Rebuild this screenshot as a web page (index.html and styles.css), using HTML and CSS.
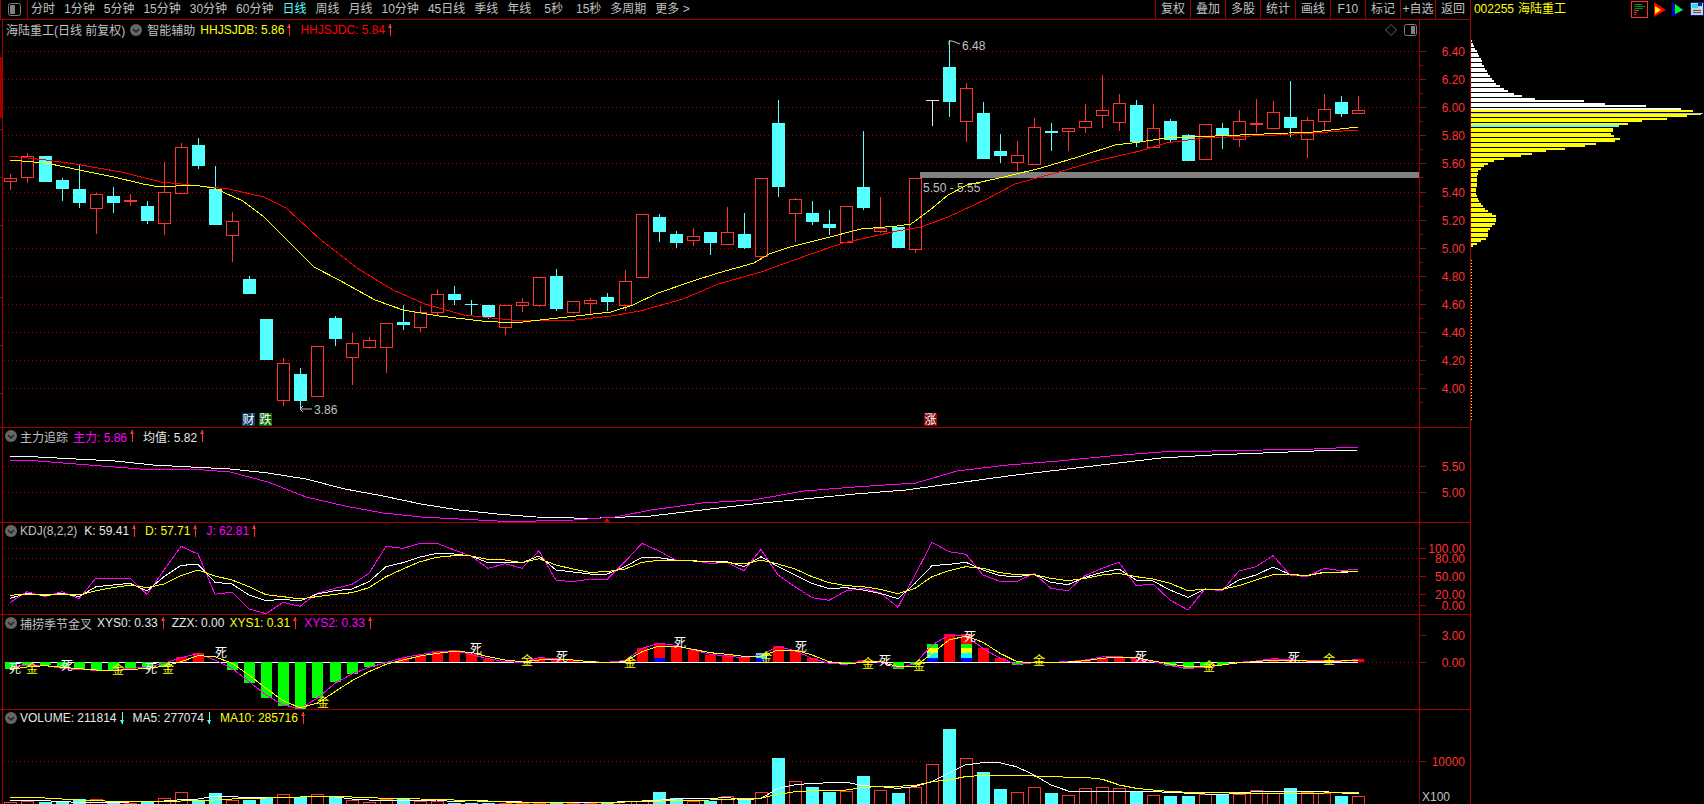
FILE: index.html
```html
<!DOCTYPE html>
<html lang="zh-CN">
<head>
    <meta charset="UTF-8">
    <title>海陆重工 002255</title>
    <link rel="stylesheet" href="styles.css">
</head>
<body>

    <!-- top bar -->
    <div class="toolbar">
        <div class="toolbar-main">
            <div class="tool-icon">
                <svg width="13" height="13" viewBox="0 0 13 13"><rect x="0.5" y="0.5" width="12" height="12" rx="2" fill="none" stroke="#808080"/><rect x="2" y="2" width="5" height="9" fill="#808080"/></svg>
            </div>
            <div class="periods">
                <span>分时</span><span>1分钟</span><span>5分钟</span><span>15分钟</span><span>30分钟</span><span>60分钟</span>
                <span class="active">日线</span><span>周线</span><span>月线</span><span>10分钟</span><span>45日线</span><span>季线</span>
                <span>年线</span><span class="wide">5秒</span><span class="wide">15秒</span><span>多周期</span><span>更多 &gt;</span>
            </div>
            <div class="actions">
                <span>复权</span><span>叠加</span><span>多股</span><span>统计</span><span>画线</span><span>F10</span><span>标记</span><span>+自选</span><span>返回</span>
            </div>
        </div>
        <div class="quote">
            <span class="quote-code">002255</span>
            <span class="quote-name">海陆重工</span>
            <div class="quote-icons">
                <svg width="17" height="17" viewBox="0 0 17 17" shape-rendering="crispEdges"><rect x="0.5" y="0.5" width="16" height="16" fill="none" stroke="#ff3232"/><rect x="3" y="3" width="8" height="1" fill="#0a8a0a"/><rect x="3" y="5" width="11" height="1" fill="#0a8a0a"/><rect x="3" y="7" width="9" height="1" fill="#0a8a0a"/><rect x="3" y="9" width="5" height="1" fill="#ff3232"/><rect x="3" y="11" width="3" height="1" fill="#ff3232"/><rect x="3" y="13" width="2" height="1" fill="#ff3232"/></svg>
                <svg width="12" height="15" viewBox="0 0 12 15"><polygon points="0,0 12,8 0,15" fill="#ff0000"/><polygon points="1,4 7,8 1,12" fill="#ffff00"/></svg>
                <svg width="12" height="15" viewBox="0 0 12 15"><polygon points="0,0 12,8 0,15" fill="#0000e0"/><polygon points="3,2 11,8 3,12" fill="#00ff00"/></svg>
                <svg width="14" height="14" viewBox="0 0 14 14" shape-rendering="crispEdges"><rect width="14" height="14" fill="#101c80"/><rect x="1" y="1" width="12" height="12" fill="#c8d0d8"/><rect x="2" y="2" width="6" height="4" fill="#20e0e0"/><rect x="8" y="1" width="4" height="3" fill="#101c80"/><rect x="3" y="8" width="8" height="1" fill="#505060"/><rect x="3" y="10" width="8" height="1" fill="#505060"/></svg>
            </div>
        </div>
    </div>

    <div class="workspace">
        <div class="panes">

            <section class="pane pane-main">
                <div class="legend legend-main">
                    <span class="grey">海陆重工(日线 前复权)</span>
                    <svg class="ball" width="12" height="12" viewBox="0 0 12 12"><circle cx="6" cy="6" r="6" fill="#666"/><path d="M3 5 L6 8 L9 5" fill="none" stroke="#222" stroke-width="1.5"/></svg>
                    <span class="grey">智能辅助</span>
                    <span class="yellow">HHJSJDB: 5.86</span><i class="up"></i>
                    <span class="red">HHJSJDC: 5.84</span><i class="up"></i>
                </div>
                <div class="pane-tools">
                    <svg width="12" height="12" viewBox="0 0 12 12"><path d="M6 0.5 L11.5 6 L6 11.5 L0.5 6 Z" fill="none" stroke="#666"/></svg>
                    <svg width="13" height="12" viewBox="0 0 13 12"><rect x="0.5" y="0.5" width="12" height="11" rx="2" fill="none" stroke="#808080"/><rect x="7" y="2" width="4" height="8" fill="#808080"/></svg>
                </div>
                <svg class="chart" id="mainChart"></svg>
            </section>

            <section class="pane pane-force">
                <div class="legend">
                    <svg class="ball" width="12" height="12" viewBox="0 0 12 12"><circle cx="6" cy="6" r="6" fill="#666"/><path d="M3 5 L6 8 L9 5" fill="none" stroke="#222" stroke-width="1.5"/></svg>
                    <span class="grey">主力追踪</span>
                    <span class="magenta">主力: 5.86</span><i class="up"></i>
                    <span class="white">均值: 5.82</span><i class="up"></i>
                </div>
                <svg class="chart" id="forceChart"></svg>
            </section>

            <section class="pane pane-kdj">
                <div class="legend">
                    <svg class="ball" width="12" height="12" viewBox="0 0 12 12"><circle cx="6" cy="6" r="6" fill="#666"/><path d="M3 5 L6 8 L9 5" fill="none" stroke="#222" stroke-width="1.5"/></svg>
                    <span class="grey kdj-name">KDJ(8,2,2)</span>
                    <span class="white">K: 59.41</span><i class="up"></i>
                    <span class="yellow">D: 57.71</span><i class="up"></i>
                    <span class="magenta">J: 62.81</span><i class="up"></i>
                </div>
                <svg class="chart" id="kdjChart"></svg>
            </section>

            <section class="pane pane-season">
                <div class="legend">
                    <svg class="ball" width="12" height="12" viewBox="0 0 12 12"><circle cx="6" cy="6" r="6" fill="#666"/><path d="M3 5 L6 8 L9 5" fill="none" stroke="#222" stroke-width="1.5"/></svg>
                    <span class="grey">捕捞季节金叉</span>
                    <span class="white">XYS0: 0.33</span><i class="up"></i>
                    <span class="white">ZZX: 0.00</span>
                    <span class="yellow">XYS1: 0.31</span><i class="up"></i>
                    <span class="magenta">XYS2: 0.33</span><i class="up"></i>
                </div>
                <svg class="chart" id="seasonChart"></svg>
            </section>

            <section class="pane pane-volume">
                <div class="legend">
                    <svg class="ball" width="12" height="12" viewBox="0 0 12 12"><circle cx="6" cy="6" r="6" fill="#666"/><path d="M3 5 L6 8 L9 5" fill="none" stroke="#222" stroke-width="1.5"/></svg>
                    <span class="white">VOLUME: 211814</span><i class="down"></i>
                    <span class="white">MA5: 277074</span><i class="down"></i>
                    <span class="yellow">MA10: 285716</span><i class="up"></i>
                </div>
                <svg class="chart" id="volumeChart"></svg>
            </section>

        </div>
        <div class="side">
            <svg id="profile" width="233" height="784"></svg>
        </div>
    </div>

    <script src="script.js"></script>
</body>
</html>
```

FILE: styles.css
```css
* {
    box-sizing: border-box;
}

html, body {
    margin: 0;
    height: 100%;
    overflow: hidden;
    background-color: #000;
}

body {
    font-family: "Liberation Sans", "Noto Sans CJK SC", sans-serif;
    font-size: 12px;
    color: #c0c0c0;
}

/* top bar */
.toolbar {
    display: flex;
    height: 20px;
}

.toolbar-main {
    display: flex;
    width: 1470px;
    border-bottom: 1px solid #a00000;
}

.tool-icon {
    display: flex;
    align-items: center;
    justify-content: center;
    width: 28px;
    padding-left: 1px;
    border-left: 1px solid #a00000;
    border-right: 1px solid #a00000;
}

.periods {
    display: flex;
    flex: 1;
    gap: 9px;
    padding-left: 3px;
    line-height: 19px;
}

.periods .active {
    color: #54ffff;
}

.periods .wide {
    margin-left: 4px;
}

.actions {
    display: flex;
    line-height: 19px;
}

.actions span {
    width: 35px;
    text-align: center;
    border-left: 1px solid #a00000;
}

.quote {
    display: flex;
    flex: 1;
    padding-left: 3px;
    line-height: 18px;
    color: #ffff00;
    white-space: nowrap;
    border-left: 1px solid #a00000;
}

.quote-name {
    margin-left: 4px;
}

.quote-icons {
    display: flex;
    flex-shrink: 0;
    align-items: center;
    gap: 6px;
    margin-left: 65px;
    padding-bottom: 2px;
}

/* chart panes */
.workspace {
    display: flex;
    height: 784px;
}

.panes {
    width: 1470px;
}

.pane {
    position: relative;
    border-bottom: 1px solid #a00000;
}

.pane-main {
    height: 408px;
}

.pane-force {
    height: 95px;
}

.pane-kdj {
    height: 92px;
}

.pane-season {
    height: 95px;
}

.pane-volume {
    height: 94px;
    border-bottom: none;
}

.chart {
    display: block;
}

.legend {
    position: absolute;
    top: 0;
    left: 5px;
    z-index: 2;
    display: flex;
    align-items: center;
    gap: 5px;
    height: 16px;
    white-space: nowrap;
}

.legend .ball {
    margin-right: -2px;
}

.legend-main {
    left: 6px;
    height: 19px;
}

.legend-main .ball {
    margin-right: 0;
}

.kdj-name {
    margin-right: 2px;
}

.legend i {
    display: block;
    position: relative;
    width: 5px;
    height: 12px;
    margin: 0 3px 0 -2px;
}

.pane-season .legend i {
    margin-right: 1px;
}

.legend i::before {
    content: "";
    position: absolute;
    left: 2px;
    width: 1px;
    height: 12px;
}

.legend i::after {
    content: "";
    position: absolute;
    left: 0;
    border-left: 2.5px solid transparent;
    border-right: 2.5px solid transparent;
}

.legend .up::before {
    background-color: #ff3232;
}

.legend .up::after {
    top: 0;
    border-bottom: 4px solid #ff3232;
}

.legend .down::before {
    background-color: #54ffff;
}

.legend .down::after {
    bottom: 0;
    border-top: 4px solid #54ffff;
}

.pane-tools {
    position: absolute;
    top: 4px;
    left: 1385px;
    z-index: 2;
    display: flex;
    gap: 7px;
}

.grey {
    color: #c0c0c0;
}

.white {
    color: #e8e8e8;
}

.yellow {
    color: #ffff00;
}

.red {
    color: #ff0000;
}

.magenta {
    color: #ff00ff;
}

/* volume by price */
.side {
    flex: 1;
    border-left: 1px solid #a00000;
}

#profile {
    display: block;
}
```

FILE: script.js
```javascript
var NS = "http://www.w3.org/2000/svg";
var RED = "#ff3232";
var CYAN = "#54ffff";
var LINE = "#a00000";

// x of candle i
function kx(i) {
    return Math.round(10.4 + 17.06 * i);
}

function el(parent, name, attrs, text) {
    var node = document.createElementNS(NS, name);
    for (var k in attrs) {
        node.setAttribute(k, attrs[k]);
    }
    if (text) {
        node.textContent = text;
    }
    parent.appendChild(node);
    return node;
}

function setup(id, top, height) {
    var svg = document.getElementById(id);
    svg.setAttribute("width", 1470);
    svg.setAttribute("height", height);
    svg.setAttribute("viewBox", "0 " + top + " 1470 " + height);
    el(svg, "rect", { x: 2, y: top, width: 1, height: height, fill: LINE, "shape-rendering": "crispEdges" });
    el(svg, "rect", { x: 1419, y: top, width: 1, height: height, fill: LINE, "shape-rendering": "crispEdges" });
    return svg;
}

function box(svg, x, y, w, h, fill) {
    el(svg, "rect", { x: x, y: y, width: w, height: h, fill: fill, "shape-rendering": "crispEdges" });
}

function outline(svg, x, y, w, h, color) {
    el(svg, "rect", { x: x + 0.5, y: y + 0.5, width: w - 1, height: h - 1, fill: "none", stroke: color, "shape-rendering": "crispEdges" });
}

function grid(svg, y) {
    el(svg, "line", { x1: 4, y1: y + 0.5, x2: 1419, y2: y + 0.5, stroke: "#a80000", "stroke-dasharray": "1 3", "shape-rendering": "crispEdges" });
}

function label(svg, text, y) {
    el(svg, "rect", { x: 1420, y: y, width: 6, height: 1, fill: LINE, "shape-rendering": "crispEdges" });
    el(svg, "text", { x: 1465, y: y + 5, fill: RED, "text-anchor": "end", "font-size": 12 }, text);
}

function poly(svg, pts, color, width) {
    el(svg, "polyline", {
        points: pts.map(function (p) { return p[0] + "," + p[1]; }).join(" "),
        fill: "none",
        stroke: color,
        "stroke-width": width || 1,
        "shape-rendering": "crispEdges"
    });
}

// a series with one value per candle, read off in the zoom scale
function series(values, base) {
    return values.map(function (v, i) {
        return [kx(i), base + v / 3];
    });
}

/* ---------- main pane ---------- */
// type, wick top, body top, body bottom, wick bottom
var candles = [
    ["r",174,178,181,190], ["r",153,156,177,183], ["c",156,156,182,182], ["c",178,180,189,201],
    ["c",164,189,203,208], ["r",193,194,208,234], ["c",187,196,203,213], ["r",194,200,202,206],
    ["c",201,206,221,224], ["r",162,192,223,235], ["r",143,147,193,193], ["c",138,145,166,169],
    ["c",166,189,225,225], ["r",212,221,235,262], ["c",276,279,294,294], ["c",319,319,360,360],
    ["r",358,363,400,406], ["c",368,374,401,410], ["r",346,346,396,396], ["c",316,318,339,346],
    ["r",333,343,357,385], ["r",337,340,347,349], ["r",323,323,347,373], ["c",305,322,325,330],
    ["r",306,312,327,332], ["r",289,294,312,315], ["c",286,294,300,305], ["c",300,304,305,315],
    ["c",305,305,317,319], ["r",305,305,327,335], ["r",298,302,305,312], ["r",277,277,305,307],
    ["c",269,276,309,311], ["r",301,301,312,314], ["r",298,300,303,315], ["c",293,297,302,311],
    ["r",270,281,305,311], ["r",214,214,277,277], ["c",214,217,232,242], ["c",231,234,243,248],
    ["r",228,236,240,246], ["c",232,232,243,255], ["r",207,232,244,245], ["c",213,234,248,249],
    ["r",178,178,256,260], ["c",100,123,187,197], ["r",198,199,213,242], ["c",201,213,222,225],
    ["c",210,224,228,235], ["r",206,206,242,242], ["c",131,187,208,210], ["r",197,228,231,233],
    ["c",227,227,248,248], ["r",178,178,249,253], ["w",100,100,101,126], ["c",40,67,102,117],
    ["r",83,88,121,142], ["c",102,113,159,159], ["c",134,151,156,163], ["r",141,155,162,171],
    ["r",118,127,164,165], ["c",123,131,133,151], ["r",128,128,131,151], ["r",104,121,127,133],
    ["r",75,110,115,128], ["r",94,103,122,131], ["c",100,105,142,147], ["r",104,128,147,147],
    ["c",119,121,140,142], ["c",134,135,161,161], ["r",124,124,159,159], ["c",123,128,136,149],
    ["r",110,121,139,147], ["r",99,123,125,133], ["r",101,112,128,128], ["c",81,117,128,137],
    ["r",117,120,139,158], ["r",94,109,121,130], ["c",96,102,114,117], ["r",96,110,113,114]
];

var maYellow = [[10,160],[46,163],[79,170],[114,177],[143,184],[160,187],[193,185],[214,188],[243,201],[264,217],[287,240],[314,267],[339,280],[375,300],[403,310],[439,316],[482,321],[514,323],[540,320],[576,316],[611,312],[633,305],[658,293],[690,282],[718,273],[754,263],[769,254],[790,247],[826,238],[861,229],[897,226],[911,224],[930,210],[948,195],[967,185],[1004,177],[1041,168],[1078,157],[1115,145],[1140,142],[1166,138],[1240,135],[1313,132],[1358,127]];
var maRed = [[10,156],[46,160],[75,164],[121,172],[161,182],[200,186],[229,189],[264,197],[286,208],[321,240],[357,268],[393,290],[425,304],[464,315],[511,320],[540,321],[576,320],[611,316],[640,311],[683,299],[718,284],[761,272],[808,255],[843,243],[897,231],[921,227],[948,217],[985,200],[1015,184],[1059,172],[1096,161],[1140,151],[1166,143],[1203,138],[1276,135],[1313,133],[1358,130]];

function drawMain() {
    var svg = setup("mainChart", 20, 407);
    var prices = ["6.40","6.20","6.00","5.80","5.60","5.40","5.20","5.00","4.80","4.60","4.40","4.20","4.00"];
    var rows = [51,79,107,135,163,192,220,248,276,304,332,360,388];

    box(svg, 0, 57, 2, 61, "#a00000");
    [81, 129, 177, 225, 297, 345, 393].forEach(function (y) {
        box(svg, 0, y, 2, 1, LINE);
    });

    rows.forEach(function (y, n) {
        grid(svg, y);
        label(svg, prices[n], y);
        box(svg, 1420, y + 14, 3, 1, LINE);
    });

    box(svg, 920, 172, 499, 6, "#808080");
    el(svg, "text", { x: 923, y: 192, fill: "#c0c0c0", "font-size": 12 }, "5.50 - 5.55");

    candles.forEach(function (c, i) {
        var x = kx(i);
        var color = c[0] === "c" ? CYAN : c[0] === "w" ? "#e8e8e8" : RED;
        if (c[0] === "w") {
            box(svg, x - 6, c[2], 13, 1, color);
            box(svg, x, c[1], 1, c[4] - c[1], color);
            return;
        }
        if (c[1] < c[2]) {
            box(svg, x, c[1], 1, c[2] - c[1], color);
        }
        if (c[4] > c[3]) {
            box(svg, x, c[3], 1, c[4] - c[3], color);
        }
        if (c[0] === "c" || c[3] - c[2] < 3) {
            box(svg, x - 6, c[2], 13, c[3] - c[2], color);
        } else {
            outline(svg, x - 6, c[2], 13, c[3] - c[2] + 1, color);
        }
    });

    poly(svg, maRed, "#ff0000");
    poly(svg, maYellow, "#ffff00");

    // highs and lows
    el(svg, "path", { d: "M949 45 L949 41 L952 41 L960 44", fill: "none", stroke: "#c0c0c0" });
    el(svg, "text", { x: 962, y: 50, fill: "#c0c0c0", "font-size": 12 }, "6.48");
    el(svg, "path", { d: "M303 406 L300 409 L303 412 M300 409 L312 409", fill: "none", stroke: "#c0c0c0" });
    el(svg, "text", { x: 314, y: 414, fill: "#c0c0c0", "font-size": 12 }, "3.86");

    // news flags
    [[242, "#0a3a6a", "财"], [259, "#0a6a0a", "跌"], [924, "#8a0a0a", "涨"]].forEach(function (f) {
        box(svg, f[0], 413, 13, 13, f[1]);
        el(svg, "text", { x: f[0] + 0.5, y: 424, fill: "#fff", "font-size": 12 }, f[2]);
    });
}

/* ---------- 主力追踪 ---------- */
function drawForce() {
    var svg = setup("forceChart", 428, 94);
    grid(svg, 466);
    grid(svg, 492);
    label(svg, "5.50", 466);
    label(svg, "5.00", 492);

    var white = [[10,456],[38,457],[76,459],[115,461],[153,465],[191,467],[230,469],[268,473],[306,479],[345,489],[383,496],[421,504],[459,510],[497,514],[536,517],[574,518],[600,518],[651,516],[702,510],[753,504],[804,499],[855,494],[906,490],[957,483],[1008,476],[1059,470],[1110,464],[1161,458],[1212,455],[1263,453],[1314,451],[1358,450]];
    var magenta = [[10,460],[38,461],[76,464],[115,467],[153,470],[191,469],[230,472],[268,482],[306,497],[345,506],[383,513],[421,517],[459,519],[497,521],[536,521],[574,520],[615,517],[651,510],[702,503],[753,500],[804,491],[855,487],[916,483],[957,471],[1008,465],[1059,461],[1110,456],[1161,452],[1212,451],[1263,450],[1314,449],[1358,447]];
    poly(svg, white, "#ffffff");
    poly(svg, magenta, "#ff00ff");
    el(svg, "polygon", { points: "607,518 604,522 610,522", fill: "#e00000" });
}

/* ---------- KDJ ---------- */
function drawKdj() {
    var svg = setup("kdjChart", 523, 91);
    [[548,"100.00"],[558,"80.00"],[576,"50.00"],[594,"20.00"],[605,"0.00"]].forEach(function (g) {
        grid(svg, g[0]);
        label(svg, g[1], g[0]);
    });

    var j = [548,515,530,515,536,474,476,474,523,450,379,402,523,516,567,581,547,559,520,505,493,460,379,385,370,370,390,408,445,431,445,392,481,485,477,478,425,370,393,421,421,430,428,452,388,465,500,533,541,513,505,518,562,465,367,395,403,465,484,484,461,505,512,467,445,427,497,492,540,570,507,512,453,440,407,465,470,445,452,447];
    var k = [535,520,527,520,530,500,495,490,513,470,436,433,487,492,525,542,538,543,522,512,507,485,440,428,411,400,402,408,428,427,428,408,450,456,462,462,440,412,413,421,422,426,425,440,410,440,465,490,506,503,510,520,536,490,437,433,427,450,467,470,463,487,494,472,457,447,480,483,510,532,507,510,480,465,441,463,468,456,458,453];
    var d = [526,522,525,522,525,512,503,495,503,492,467,450,468,480,500,524,530,537,530,523,518,503,470,447,425,412,407,408,418,420,428,416,435,447,457,455,447,427,421,421,423,425,428,432,420,432,447,470,488,497,500,508,521,505,470,452,440,445,458,464,464,475,482,475,465,460,470,477,490,512,507,508,497,480,464,464,466,458,456,453];
    poly(svg, series(j, 420), "#ff00ff");
    poly(svg, series(k, 420), "#ffffff");
    poly(svg, series(d, 420), "#ffff00");
}

/* ---------- 捕捞季节 ---------- */
function drawSeason() {
    var svg = setup("seasonChart", 615, 94);
    var tops = [178,167,165,172,176,180,180,175,173,170,142,130,155,180,218,264,288,297,264,216,192,172,158,143,134,124,120,132,146,155,157,143,148,150,155,157,150,114,100,108,120,134,136,142,130,108,120,144,157,160,150,156,176,164,102,72,72,114,144,164,157,157,155,150,143,140,147,155,167,176,172,165,155,152,147,148,153,152,152,148];
    var rainbow = { 38: 1, 44: 2, 54: 4, 56: 4 };
    var bands = [[144, "#0000ff"], [130, "#00ffff"], [114, "#ffff00"], [102, "#00ff00"]];
    var mag = [170,166,166,175,178,181,180,175,172,160,143,131,150,175,215,255,285,296,265,220,192,172,158,143,134,126,122,133,146,155,157,143,146,150,155,157,152,115,100,106,120,133,138,144,135,110,122,145,160,163,152,157,175,160,105,75,78,115,145,163,158,157,155,150,141,139,147,155,167,175,172,165,157,153,146,149,153,152,152,149];
    var yel = [178,171,167,172,176,180,182,178,176,168,155,137,140,160,195,235,272,293,280,245,212,185,163,150,138,130,124,127,140,150,155,150,148,150,155,158,155,125,108,108,118,128,133,139,140,120,120,135,155,162,157,155,170,170,130,90,78,97,130,155,158,157,156,152,145,141,143,153,162,170,170,165,158,155,150,150,153,153,153,151];
    var marks = [
        ["死",15,669],["金",32,669],["死",67,666],["金",118,670],["死",151,669],["金",168,669],["死",221,653],["金",323,703],
        ["死",476,649],["金",527,661],["死",562,657],["金",630,663],["死",680,643],["金",766,658],["死",801,647],["金",868,664],
        ["死",885,661],["金",919,666],["死",970,637],["金",1039,661],["死",1141,657],["金",1209,667],["死",1294,658],["金",1329,660]
    ];
    var base = 610 + 157 / 3;

    grid(svg, 662);
    label(svg, "3.00", 635);
    label(svg, "0.00", 662);
    box(svg, 5, 662, 1353, 1, "#ffffff");

    tops.forEach(function (v, i) {
        var y = 610 + v / 3;
        if (v > 157) {
            box(svg, kx(i) - 5, base, 11, y - base, "#00ff00");
        } else if (v < 157) {
            box(svg, kx(i) - 5, y, 11, base - y, "#ff0000");
            var n = rainbow[i] || 0;
            var from = 157;
            for (var b = 0; b < n; b++) {
                box(svg, kx(i) - 5, 610 + bands[b][0] / 3, 11, (from - bands[b][0]) / 3, bands[b][1]);
                from = bands[b][0];
            }
        }
    });

    poly(svg, series(mag, 610), "#ff00ff");
    poly(svg, series(yel, 610), "#ffff00");

    marks.forEach(function (m) {
        el(svg, "text", {
            x: m[1], y: m[2] + 4, fill: m[0] === "死" ? "#ffffff" : "#ffff00",
            "text-anchor": "middle", "font-size": 12
        }, m[0]);
    });
}

/* ---------- volume ---------- */
function drawVolume() {
    var svg = setup("volumeChart", 710, 94);
    var tops = [575,572,575,575,568,568,575,578,575,564,547,572,549,571,569,561,552,562,552,561,571,576,566,568,573,574,578,578,578,578,580,580,580,580,578,578,574,574,546,564,572,572,559,565,547,444,514,532,546,544,498,541,549,532,463,357,445,486,537,547,532,549,556,535,532,535,542,556,558,558,552,552,552,541,550,534,547,550,558,558];
    var white = [570,570,572,575,577,577,577,576,575,573,569,567,558,560,563,564,563,561,560,561,567,570,572,572,571,570,575,572,573,575,576,577,577,578,579];
    var yellow = [562,562,564,567,570,572,574,575,575,575,573,572,570,567,565,564,562,561,559,559,561,563,565,566,567,568,570,572,575,576,577,578,578,579,579];
    var whiteRight = [[0,578],[100,572],[148,567],[215,566],[248,562],[282,570],[316,565],[349,535],[383,524],[416,520],[483,517],[516,527],[549,530],[583,535],[616,530],[650,515],[683,490],[716,465],[750,458],[783,458],[816,470],[851,495],[884,525],[918,543],[951,543],[1018,543],[1051,543],[1118,547],[1185,552],[1219,554],[1252,549],[1285,545],[1420,545],[1453,549],[1487,550]];
    var yellowRight = [[0,578],[100,574],[215,570],[282,566],[316,564],[349,553],[383,545],[416,542],[483,540],[516,532],[549,530],[616,527],[650,515],[683,510],[716,500],[750,496],[816,497],[884,499],[918,502],[951,502],[985,508],[1018,525],[1051,535],[1118,545],[1185,548],[1252,549],[1319,550],[1420,549],[1487,548]];

    function rightSide(list) {
        return list.map(function (p) { return [600 + p[0] / 1.96, 610 + p[1] / 3]; });
    }

    grid(svg, 761);
    label(svg, "10000", 761);
    el(svg, "text", { x: 1422, y: 801, fill: "#c0c0c0", "font-size": 12 }, "X100");

    tops.forEach(function (v, i) {
        var y = Math.round(610 + v / 3);
        if (candles[i][0] === "c") {
            box(svg, kx(i) - 6, y, 13, 804 - y, CYAN);
        } else {
            outline(svg, kx(i) - 6, y, 13, 814 - y, RED);
        }
    });

    poly(svg, series(white, 610).concat(rightSide(whiteRight)), "#ffffff");
    poly(svg, series(yellow, 610).concat(rightSide(yellowRight)), "#ffff00");
}

/* ---------- volume by price ---------- */
function drawProfile() {
    var svg = document.getElementById("profile");
    // zoomed y, zoomed x of the bar ends
    var shape = [[60,214],[70,218],[80,222],[100,232],[115,240],[130,245],[145,255],[160,262],[175,275],[190,288],[200,305],[210,320],[220,345],[230,378],[235,428],[240,548],[248,615],[252,690],[257,765],[262,838],[268,868],[272,882],[276,897],[281,905],[285,858],[290,820],[295,778],[300,722],[305,695],[310,668],[314,658],[320,638],[330,635],[340,628],[350,650],[355,662],[362,632],[368,580],[375,552],[382,495],[388,445],[395,405],[405,360],[412,310],[420,278],[430,255],[440,242],[450,232],[470,228],[490,228],[510,225],[530,228],[545,238],[560,248],[570,260],[583,285],[605,285],[620,268],[630,262],[650,260],[660,240],[670,222],[680,212]];

    function widthAt(v) {
        for (var n = 1; n < shape.length; n++) {
            if (v <= shape[n][0]) {
                var a = shape[n - 1];
                var b = shape[n];
                return (a[1] + (b[1] - a[1]) * (v - a[0]) / (b[0] - a[0]) - 210) / 3;
            }
        }
        return 1;
    }

    // the side starts at y=20, so page y minus 20 is what is drawn
    var row = 0;
    for (var v = 60; v <= 680; v += 7.5) {
        var color = v < 265 ? "#ffffff" : "#ffff00";
        if (row === 34) {
            color = "#54ffff";
        }
        box(svg, 0, Math.round(v / 3), Math.max(1, Math.round(widthAt(v))), 2, color);
        row++;
    }
    box(svg, 0, 93, 232, 1, "#c0c0c0");

    for (var y = 240; y < 400; y += 3) {
        box(svg, 0, y, 1, 1, "#ffff00");
    }
}

drawMain();
drawForce();
drawKdj();
drawSeason();
drawVolume();
drawProfile();
```
